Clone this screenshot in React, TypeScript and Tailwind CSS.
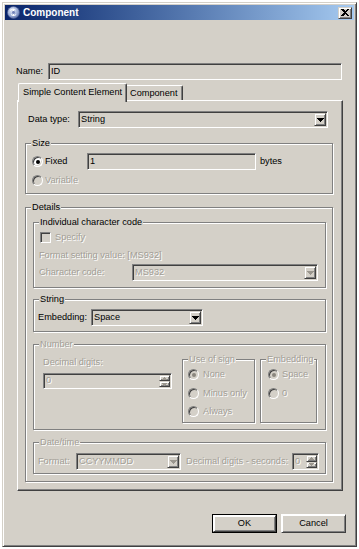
import React from "react";

const DIS = "text-[#a29e96] [text-shadow:1px_1px_0_#ffffff]";
const SUNKEN =
  "border border-t-[#808080] border-l-[#808080] border-r-white border-b-white shadow-[inset_1px_1px_0_#404040,inset_-1px_-1px_0_#d4d0c8] bg-[#d4d0c8]";
const RAISED =
  "border border-t-[#d4d0c8] border-l-[#d4d0c8] border-r-[#404040] border-b-[#404040] shadow-[inset_1px_1px_0_#ffffff,inset_-1px_-1px_0_#808080] bg-[#d4d0c8]";

function DownArrow({ disabled }: { disabled?: boolean }) {
  return (
    <svg width="7" height="4" viewBox="0 0 7 4" shapeRendering="crispEdges">
      <path d="M0 0h7v1H0z M1 1h5v1H1z M2 2h3v1H2z M3 3h1v1H3z" fill={disabled ? "#9a968e" : "#000"} />
    </svg>
  );
}

function SmallArrow({ up, disabled }: { up?: boolean; disabled?: boolean }) {
  return (
    <svg width="5" height="3" viewBox="0 0 5 3" shapeRendering="crispEdges">
      <path
        d={up ? "M2 0h1v1H2z M1 1h3v1H1z M0 2h5v1H0z" : "M0 0h5v1H0z M1 1h3v1H1z M2 2h1v1H2z"}
        fill={disabled ? "#9a968e" : "#000"}
      />
    </svg>
  );
}

function Combo({ className, value, disabled }: { className: string; value: string; disabled?: boolean }) {
  return (
    <div className={`flex p-[1px] ${SUNKEN} ${className}`}>
      <div className={`flex-1 flex items-center pl-[1px] leading-none ${disabled ? DIS : "text-black"}`}>{value}</div>
      <div className={`w-[12px] flex items-center justify-center ${RAISED}`}>
        <DownArrow disabled={disabled} />
      </div>
    </div>
  );
}

function Spinner({ className, value }: { className: string; value: string }) {
  return (
    <div className={`flex p-[1px] ${SUNKEN} ${className}`}>
      <div className={`flex-1 flex items-center pl-[1px] leading-none ${DIS}`}>{value}</div>
      <div className="w-[11px] flex flex-col">
        <div className={`flex-1 flex items-center justify-center ${RAISED}`}>
          <SmallArrow up disabled />
        </div>
        <div className={`flex-1 flex items-center justify-center ${RAISED}`}>
          <SmallArrow disabled />
        </div>
      </div>
    </div>
  );
}

function Field({ className, value }: { className: string; value: string }) {
  return (
    <div className={`flex items-center p-[1px] ${SUNKEN} ${className}`}>
      <span className="pl-[1px] leading-none text-black">{value}</span>
    </div>
  );
}

function Radio({ checked, disabled }: { checked?: boolean; disabled?: boolean }) {
  return (
    <span
      className={`inline-flex shrink-0 items-center justify-center w-[11px] h-[11px] rounded-full border border-t-[#808080] border-l-[#808080] border-r-white border-b-white shadow-[inset_1px_1px_0_#404040,inset_-1px_-1px_0_#d4d0c8] ${
        disabled ? "bg-[#d4d0c8]" : "bg-white"
      }`}
    >
      {checked && <span className={`w-[4px] h-[4px] rounded-full ${disabled ? "bg-[#8a867e]" : "bg-black"}`} />}
    </span>
  );
}

function Group({
  label,
  disabled,
  className,
  children,
}: {
  label: string;
  disabled?: boolean;
  className: string;
  children?: React.ReactNode;
}) {
  return (
    <div className={`relative flex flex-col border border-[#808080] shadow-[inset_1px_1px_0_#ffffff,1px_1px_0_#ffffff] ${className}`}>
      <span
        className={`absolute -top-[6px] left-[5px] px-[1px] bg-[#d4d0c8] leading-[11px] whitespace-nowrap ${
          disabled ? DIS : "text-black"
        }`}
      >
        {label}
      </span>
      {children}
    </div>
  );
}

function RadioRow({
  label,
  checked,
  disabled,
  className,
}: {
  label: string;
  checked?: boolean;
  disabled?: boolean;
  className: string;
}) {
  return (
    <div className={`flex items-center h-[11px] ${className}`}>
      <Radio checked={checked} disabled={disabled} />
      <span className={`leading-none whitespace-nowrap ${disabled ? DIS : "text-black"}`}>{label}</span>
    </div>
  );
}

function TitleIcon() {
  return (
    <svg width="13" height="13" viewBox="0 0 13 13">
      <defs>
        <radialGradient id="ig" cx="40%" cy="35%" r="70%">
          <stop offset="0%" stopColor="#e6ecf8" />
          <stop offset="60%" stopColor="#9fb0d8" />
          <stop offset="100%" stopColor="#5a6fa8" />
        </radialGradient>
      </defs>
      <circle cx="6.5" cy="6.5" r="6" fill="url(#ig)" stroke="#4a5a90" strokeWidth="0.6" />
      <path d="M3 4.5c1.5-1.5 4-1.8 5.5-.5M4 8.5c1.2 1.2 3.6 1.4 5.2 0M6.5 3v7" stroke="#ffffff" strokeWidth="1" fill="none" />
      <circle cx="6.5" cy="6.5" r="1.4" fill="#6f80b8" />
    </svg>
  );
}

export default function App() {
  return (
    <div className="w-[359px] h-[549px] bg-white pt-[2px] pl-[2px] font-['Liberation_Sans',Arial,sans-serif] text-[9.2px] text-black">
      <div className="w-[355px] h-[545px] flex flex-col p-[2px] border border-t-[#d4d0c8] border-l-[#d4d0c8] border-r-[#404040] border-b-[#404040] shadow-[inset_1px_1px_0_#ffffff,inset_-1px_-1px_0_#808080] bg-[#d4d0c8]">
        {/* Title bar */}
        <div className="h-[15px] flex items-center bg-linear-to-r from-[#0a246a] to-[#a6caf0]">
          <div className="ml-[2px] flex items-center">
            <TitleIcon />
          </div>
          <span className="ml-[3px] text-white font-bold text-[10px] leading-none">Component</span>
          <div className={`ml-auto mr-[2px] w-[14px] h-[12px] flex items-center justify-center ${RAISED}`}>
            <svg width="8" height="7" viewBox="0 0 8 7" shapeRendering="crispEdges">
              <path d="M0 0h2l2 2 2-2h2L5 3.5 8 7H6L4 5 2 7H0l3-3.5z" fill="#000" />
            </svg>
          </div>
        </div>

        {/* Body */}
        <div className="flex-1 flex flex-col">
          {/* Name row */}
          <div className="mt-[43px] flex items-center h-[17px]">
            <span className="ml-[11px] w-[32px] leading-none">Name:</span>
            <Field className="w-[294px] h-[17px]" value="ID" />
          </div>

          {/* Tabs */}
          <div className="mt-[3px] ml-[13px] flex items-end h-[17px]">
            <div className="relative z-10 -mb-[2px] w-[109px] h-[19px] pl-[4px] pt-[4px] leading-none bg-[#d4d0c8] border-l border-t border-r border-l-white border-t-white border-r-[#404040] shadow-[inset_-1px_0_0_#808080] rounded-t-[2px] whitespace-nowrap">
              Simple Content Element
            </div>
            <div className="w-[56px] h-[15px] pl-[3px] pt-[3px] leading-none bg-[#d4d0c8] border-t border-r border-t-white border-r-[#404040] shadow-[inset_-1px_0_0_#808080] rounded-tr-[2px] whitespace-nowrap">
              Component
            </div>
          </div>

          {/* Tab panel */}
          <div className="ml-[12px] w-[326px] h-[391px] flex flex-col border border-t-white border-l-white border-r-[#404040] border-b-[#404040] shadow-[inset_-1px_-1px_0_#808080]">
            {/* Data type */}
            <div className="mt-[10px] flex items-center h-[17px]">
              <span className="ml-[10px] w-[50px] leading-none">Data type:</span>
              <Combo className="w-[250px] h-[17px]" value="String" />
            </div>

            {/* Size */}
            <Group label="Size" className="mt-[15px] ml-[7px] w-[308px] h-[51px]">
              <div className="mt-[9px] ml-[6px] flex items-center h-[17px]">
                <div className="w-[55px] flex items-center gap-[2px]">
                  <Radio checked />
                  <span className="leading-none">Fixed</span>
                </div>
                <Field className="w-[169px] h-[17px]" value="1" />
                <span className="ml-[4px] leading-none">bytes</span>
              </div>
              <RadioRow label="Variable" disabled className="mt-[5px] ml-[6px] gap-[2px]" />
            </Group>

            {/* Details */}
            <Group label="Details" className="mt-[13px] ml-[7px] w-[308px] h-[275px]">
              <Group label="Individual character code" className="mt-[14px] ml-[7px] w-[293px] h-[66px]">
                <div className="mt-[9px] ml-[6px] flex items-center h-[11px] gap-[4px]">
                  <span className={`w-[11px] h-[11px] ${SUNKEN}`} />
                  <span className={`leading-none ${DIS}`}>Specify</span>
                </div>
                <div className={`mt-[7px] ml-[5px] h-[11px] flex items-center leading-none ${DIS}`}>
                  Format setting value: [MS932]
                </div>
                <div className="mt-[3px] ml-[5px] flex items-center h-[17px]">
                  <span className={`w-[93px] leading-none ${DIS}`}>Character code:</span>
                  <Combo className="w-[186px] h-[17px]" value="MS932" disabled />
                </div>
              </Group>

              <Group label="String" className="mt-[11px] ml-[7px] w-[293px] h-[33px]">
                <div className="mt-[9px] ml-[4px] flex items-center h-[17px]">
                  <span className="w-[53px] leading-none">Embedding:</span>
                  <Combo className="w-[112px] h-[17px]" value="Space" />
                </div>
              </Group>

              <Group label="Number" disabled className="mt-[12px] ml-[7px] w-[293px] h-[86px]">
                <div className="flex items-start">
                  <div className="ml-[9px] flex flex-col">
                    <div className={`mt-[12px] h-[11px] flex items-center leading-none ${DIS}`}>Decimal digits:</div>
                    <Spinner className="mt-[5px] w-[129px] h-[16px]" value="0" />
                  </div>
                  <Group label="Use of sign" disabled className="ml-[10px] mt-[14px] w-[73px] h-[64px]">
                    <RadioRow label="None" checked disabled className="mt-[9px] ml-[5px] gap-[4px]" />
                    <RadioRow label="Minus only" disabled className="mt-[8px] ml-[5px] gap-[4px]" />
                    <RadioRow label="Always" disabled className="mt-[7px] ml-[5px] gap-[4px]" />
                  </Group>
                  <Group label="Embedding" disabled className="ml-[5px] mt-[14px] w-[57px] h-[64px]">
                    <RadioRow label="Space" checked disabled className="mt-[9px] ml-[7px] gap-[3px]" />
                    <RadioRow label="0" disabled className="mt-[8px] ml-[7px] gap-[3px]" />
                  </Group>
                </div>
              </Group>

              <Group label="Date/time" disabled className="mt-[12px] ml-[7px] w-[293px] h-[32px]">
                <div className="mt-[10px] ml-[4px] flex items-center h-[17px]">
                  <span className={`w-[38px] leading-none ${DIS}`}>Format:</span>
                  <Combo className="w-[105px] h-[17px]" value="CCYYMMDD" disabled />
                  <span className={`ml-[5px] w-[106px] leading-none whitespace-nowrap ${DIS}`}>Decimal digits - seconds:</span>
                  <Spinner className="w-[27px] h-[17px]" value="0" />
                </div>
              </Group>
            </Group>
          </div>

          {/* Buttons */}
          <div className="mt-[23px] mr-[8px] flex justify-end gap-[4px]">
            <div className="w-[65px] h-[19px] border border-black">
              <div className={`w-full h-full flex items-center justify-center leading-none ${RAISED} border-t-white border-l-white`}>OK</div>
            </div>
            <div className={`w-[65px] h-[19px] flex items-center justify-center leading-none ${RAISED} border-t-white border-l-white`}>
              Cancel
            </div>
          </div>
        </div>
      </div>
    </div>
  );
}
